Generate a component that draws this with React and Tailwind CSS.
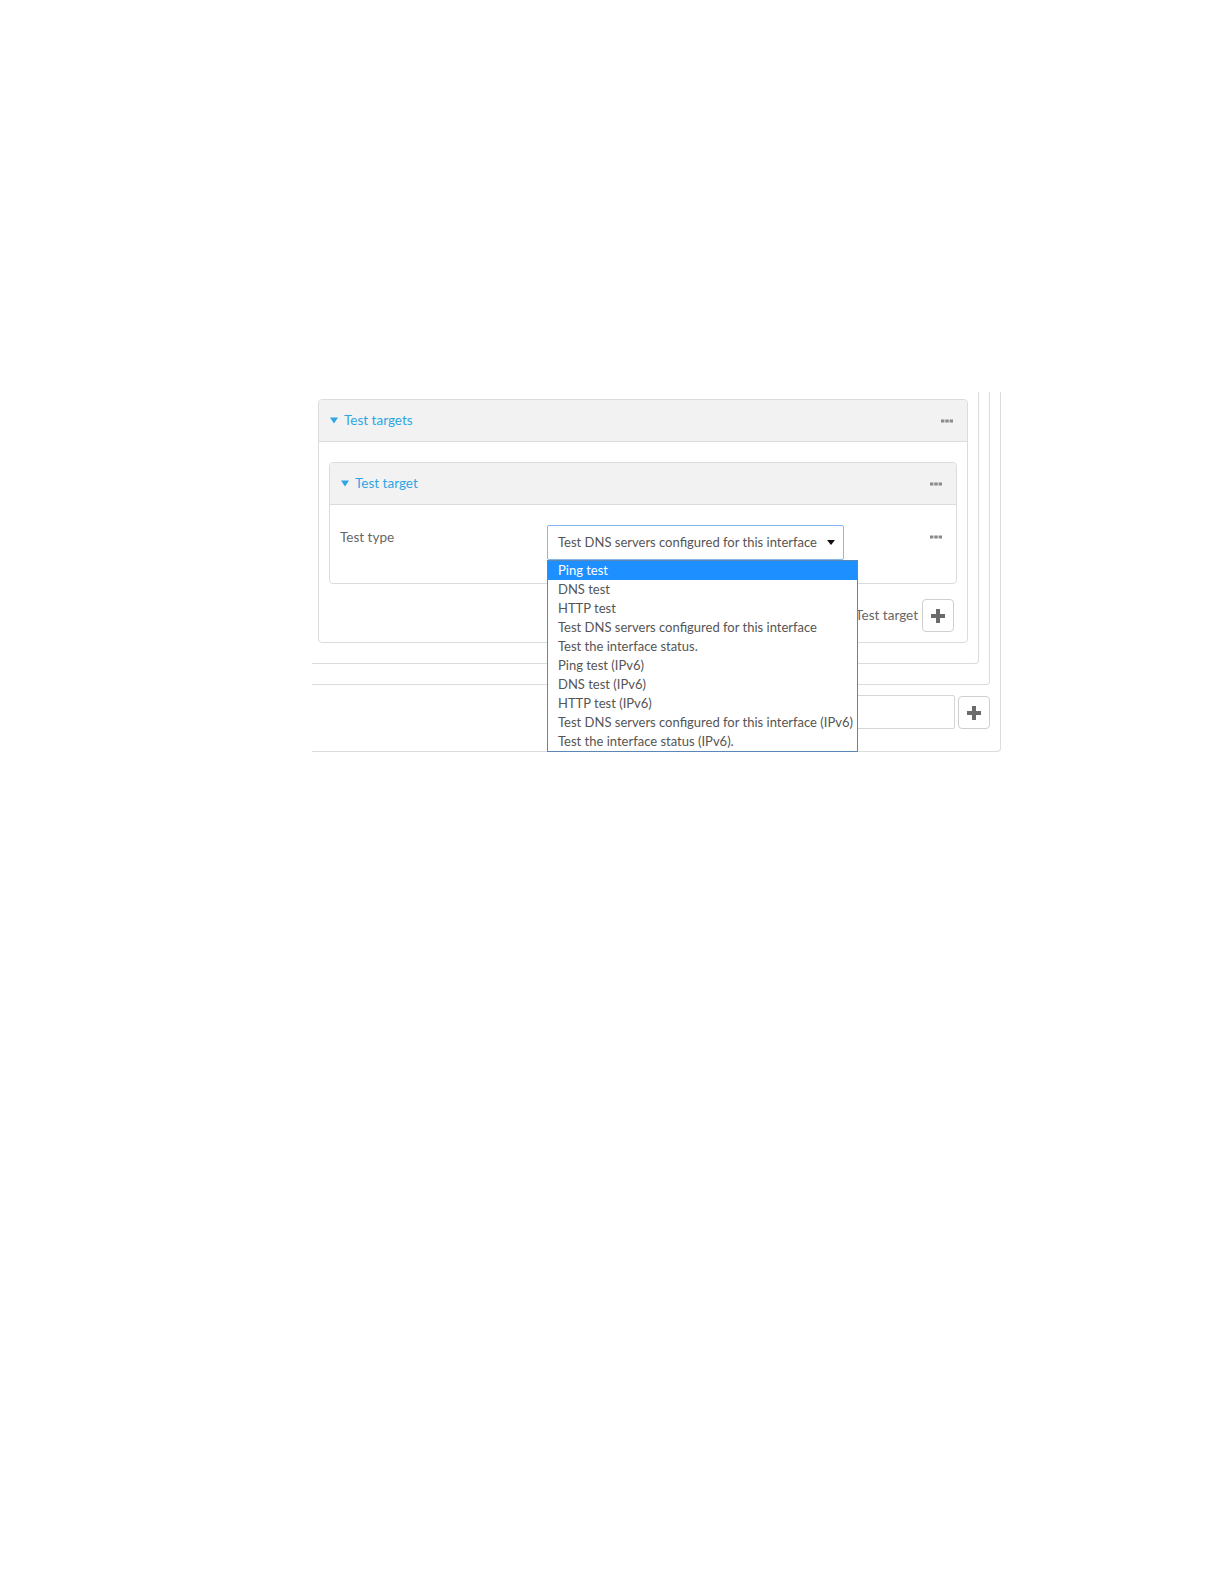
import React from "react";

const Tri = ({ className = "" }) => (
  <svg width="8" height="7" viewBox="0 0 8 7" className={className}>
    <path d="M0 0.5 L8 0.5 L4 6.5 Z" fill="#2ea6e4" />
  </svg>
);

const Dots = () => (
  <svg width="12" height="4" viewBox="0 0 12 4">
    <rect x="0" y="0.5" width="3.4" height="3" fill="#8a8a8a" />
    <rect x="4.3" y="0.5" width="3.4" height="3" fill="#8a8a8a" />
    <rect x="8.6" y="0.5" width="3.4" height="3" fill="#8a8a8a" />
  </svg>
);

const Plus = () => (
  <svg width="16" height="16" viewBox="0 0 16 16">
    <path d="M6 1 H10 V6 H15 V10 H10 V15 H6 V10 H1 V6 H6 Z" fill="#6b6b6b" />
  </svg>
);

const items = [
  "Ping test",
  "DNS test",
  "HTTP test",
  "Test DNS servers configured for this interface",
  "Test the interface status.",
  "Ping test (IPv6)",
  "DNS test (IPv6)",
  "HTTP test (IPv6)",
  "Test DNS servers configured for this interface (IPv6)",
  "Test the interface status (IPv6).",
];

export default function App() {
  return (
    <div
      className="min-h-[1584px] w-[1224px] bg-white pt-[392px] pl-[312px] text-[13px] text-[#555]"
      style={{ fontFamily: "Lato, 'Open Sans', sans-serif" }}
    >
      {/* Box A */}
      <div className="relative w-[689px] border-r border-b border-[#dcdcdc] rounded-br-[4px] pr-[10px] pb-[22px]">
        {/* Box B */}
        <div className="border-r border-b border-[#dcdcdc] rounded-br-[4px] pr-[10px] pb-[20px]">
          {/* Box C */}
          <div className="border-r border-b border-[#dcdcdc] rounded-br-[4px] pr-[10px] pb-[20px] pt-[7px] pl-[6px]">
            {/* Box D: Test targets */}
            <div className="border border-[#dcdcdc] rounded-[4px]">
              <div className="h-[42px] bg-[#f2f2f2] border-b border-[#dcdcdc] rounded-t-[4px] flex items-center pl-[11px] pr-[14px]">
                <Tri />
                <span className="ml-[6px] text-[13.5px] text-[#2ea6e4]">Test targets</span>
                <div className="ml-auto flex items-center">
                  <Dots />
                </div>
              </div>
              <div className="pt-[20px] px-[10px] pb-[10px]">
                {/* Box E: Test target */}
                <div className="border border-[#dcdcdc] rounded-[4px]">
                  <div className="h-[42px] bg-[#f2f2f2] border-b border-[#dcdcdc] rounded-t-[4px] flex items-center pl-[11px] pr-[14px]">
                    <Tri />
                    <span className="ml-[6px] text-[13.5px] text-[#2ea6e4]">Test target</span>
                    <div className="ml-auto flex items-center">
                      <Dots />
                    </div>
                  </div>
                  <div className="flex pl-[10px] pr-[14px] pt-[20px] pb-[23px]">
                    <div className="w-[207px] pt-[2px] text-[13.5px] text-[#666]">Test type</div>
                    <div className="relative">
                      <div className="w-[297px] h-[35px] border border-[#86b7e8] rounded-[2px] flex items-center pl-[10px] pr-[8px]">
                        <span>Test DNS servers configured for this interface</span>
                        <svg width="8" height="5" viewBox="0 0 8 5" className="ml-auto">
                          <path d="M0 0 L8 0 L4 5 Z" fill="#111" />
                        </svg>
                      </div>
                      <div className="absolute left-0 top-[35px] z-10 w-[311px] border border-[#5a87b5] bg-white">
                        {items.map((t, i) => (
                          <div
                            key={t}
                            className={
                              i === 0
                                ? "h-[19px] leading-[19px] pl-[10px] bg-[#1e8fff] text-white whitespace-nowrap"
                                : "h-[19px] leading-[19px] pl-[10px] text-[#555] whitespace-nowrap"
                            }
                          >
                            {t}
                          </div>
                        ))}
                      </div>
                    </div>
                    <div className="ml-auto pt-[10px]">
                      <Dots />
                    </div>
                  </div>
                </div>
                <div className="mt-[15px] flex items-center justify-end gap-[4px] mr-[3px]">
                  <span className="text-[13.5px] text-[#666]">Test target</span>
                  <button className="w-[32px] h-[33px] border border-[#cfcfcf] rounded-[4px] bg-white flex items-center justify-center">
                    <Plus />
                  </button>
                </div>
              </div>
            </div>
          </div>
        </div>
        {/* Bottom row */}
        <div className="mt-[10px] flex items-start justify-end gap-[3px]">
          <div className="w-[400px] h-[34px] border border-[#d6d6d6] rounded-[2px]" />
          <button className="mt-[1px] w-[32px] h-[33px] border border-[#cfcfcf] rounded-[4px] bg-white flex items-center justify-center">
            <Plus />
          </button>
        </div>
      </div>
    </div>
  );
}
